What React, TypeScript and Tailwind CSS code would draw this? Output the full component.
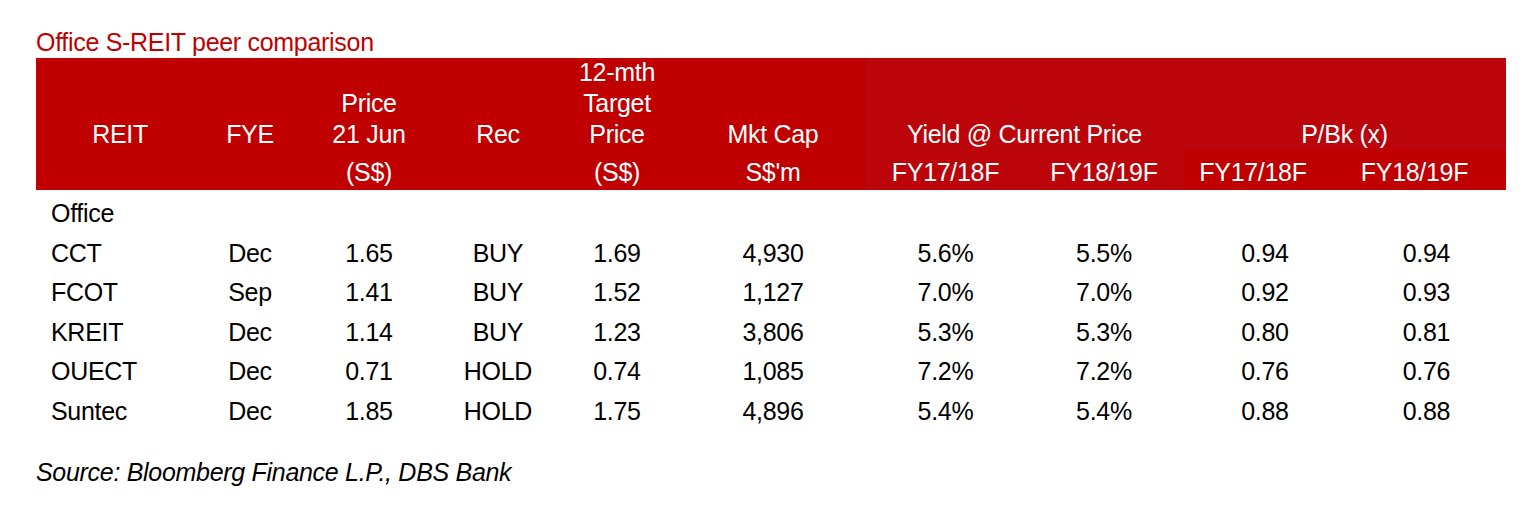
const COLS =
  "grid grid-cols-[168px_92px_146px_112px_126px_186px_159px_158px_140px_183px] w-[1470px]";

type Row = {
  reit: string;
  fye: string;
  price: string;
  rec: string;
  target: string;
  cap: string;
  y1: string;
  y2: string;
  pb1: string;
  pb2: string;
};

const ROWS: Row[] = [
  { reit: "CCT", fye: "Dec", price: "1.65", rec: "BUY", target: "1.69", cap: "4,930", y1: "5.6%", y2: "5.5%", pb1: "0.94", pb2: "0.94" },
  { reit: "FCOT", fye: "Sep", price: "1.41", rec: "BUY", target: "1.52", cap: "1,127", y1: "7.0%", y2: "7.0%", pb1: "0.92", pb2: "0.93" },
  { reit: "KREIT", fye: "Dec", price: "1.14", rec: "BUY", target: "1.23", cap: "3,806", y1: "5.3%", y2: "5.3%", pb1: "0.80", pb2: "0.81" },
  { reit: "OUECT", fye: "Dec", price: "0.71", rec: "HOLD", target: "0.74", cap: "1,085", y1: "7.2%", y2: "7.2%", pb1: "0.76", pb2: "0.76" },
  { reit: "Suntec", fye: "Dec", price: "1.85", rec: "HOLD", target: "1.75", cap: "4,896", y1: "5.4%", y2: "5.4%", pb1: "0.88", pb2: "0.88" },
];

// left header columns span both header rows
function HeadCell({ lines, sub }: { lines: string[]; sub?: string }) {
  return (
    <div className="row-span-2 flex flex-col bg-[#c00000] text-center">
      <div className="flex h-[92px] flex-col justify-end">
        {lines.map((l) => (
          <div key={l} className="leading-[31px]">
            {l}
          </div>
        ))}
      </div>
      <div className="flex h-[40px] items-center justify-center pt-[6px]">
        {sub}
      </div>
    </div>
  );
}

function SubCell({ label, dark }: { label: string; dark?: boolean }) {
  return (
    <div
      className={
        dark
          ? "flex h-[40px] items-center justify-center bg-[#bb050b] pt-[6px]"
          : "flex h-[40px] items-center justify-center bg-[#c00000] pt-[6px]"
      }
    >
      {label}
    </div>
  );
}

export default function App() {
  return (
    <div className="min-h-[518px] bg-white pl-[36px] pt-[28px] font-['Liberation_Sans',Arial,sans-serif] text-[25px] tracking-[-0.3px] text-black">
      <h2 className="mb-[2px] leading-[28px] text-[#c00000]">
        Office S-REIT peer comparison
      </h2>

      {/* Header */}
      <div className={`${COLS} grid-rows-[92px_40px] text-white`}>
        <HeadCell lines={["REIT"]} />
        <HeadCell lines={["FYE"]} />
        <HeadCell lines={["Price", "21 Jun"]} sub="(S$)" />
        <HeadCell lines={["Rec"]} />
        <HeadCell lines={["12-mth", "Target", "Price"]} sub="(S$)" />
        <HeadCell lines={["Mkt Cap"]} sub="S$'m" />
        <div className="col-span-2 flex items-end justify-center bg-[#bb050b] leading-[31px]">
          Yield @ Current Price
        </div>
        <div className="col-span-2 flex items-end justify-center bg-[#bb050b] leading-[31px]">
          P/Bk (x)
        </div>
        <SubCell label="FY17/18F" dark />
        <SubCell label="FY18/19F" dark />
        <SubCell label="FY17/18F" />
        <SubCell label="FY18/19F" />
      </div>

      {/* Body */}
      <div className="pt-[4px]">
        <div className={`${COLS} h-[39.5px] items-center`}>
          <div className="pl-[15px]">Office</div>
        </div>
        {ROWS.map((r) => (
          <div key={r.reit} className={`${COLS} h-[39.5px] items-center text-center`}>
            <div className="pl-[15px] text-left">{r.reit}</div>
            <div>{r.fye}</div>
            <div>{r.price}</div>
            <div>{r.rec}</div>
            <div>{r.target}</div>
            <div>{r.cap}</div>
            <div>{r.y1}</div>
            <div>{r.y2}</div>
            <div className="pl-[24px]">{r.pb1}</div>
            <div className="pl-[24px]">{r.pb2}</div>
          </div>
        ))}
      </div>

      <p className="mt-[27px] italic leading-[28px]">
        Source: Bloomberg Finance L.P., DBS Bank
      </p>
    </div>
  );
}
